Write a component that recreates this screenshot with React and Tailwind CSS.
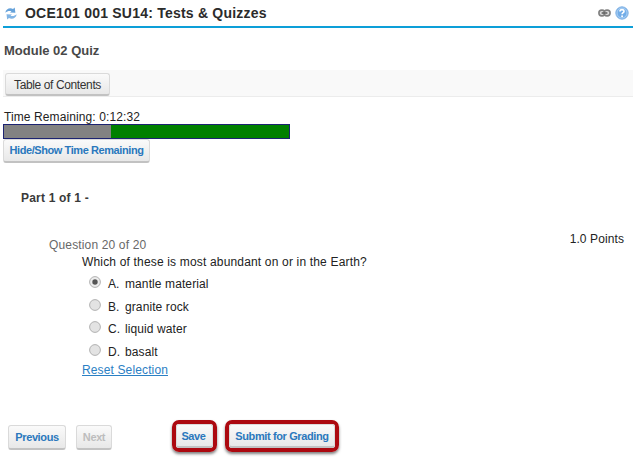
const buttonBase =
  'flex items-center justify-center rounded-[3px] border border-[#dadada] border-b-2 border-b-[#c2c2c2] bg-gradient-to-b from-[#fafafa] to-[#e8e8e8] whitespace-nowrap';

const options = [
  { letter: 'A.', text: 'mantle material', checked: true },
  { letter: 'B.', text: 'granite rock', checked: false },
  { letter: 'C.', text: 'liquid water', checked: false },
  { letter: 'D.', text: 'basalt', checked: false },
];

function RefreshIcon() {
  return (
    <svg className="block h-[13px] w-[12px]" viewBox="0 0 12 13" aria-hidden="true">
      <path d="M0.3 5.8 C0.8 2 4.6 0.4 8 1.9 L9.7 0.6 L10.4 5.8 L5 5.6 L6.5 4.3 C4.4 3.6 2.2 4.1 0.3 5.8Z" fill="#66a2da" />
      <path d="M11.7 7.2 C11.2 11 7.4 12.6 4 11.1 L2.2 12.4 L1.5 7.2 L7 7.4 L5.5 8.7 C7.6 9.4 9.8 8.9 11.7 7.2Z" fill="#82b5e5" />
    </svg>
  );
}

function LinkIcon() {
  return (
    <svg className="block h-[8px] w-[13px]" viewBox="0 0 13 8" fill="none" aria-hidden="true">
      <rect x="0.9" y="1.1" width="6" height="5.8" rx="2.8" fill="#ddd" stroke="#808080" strokeWidth="1.6" />
      <rect x="6.1" y="1.1" width="6" height="5.8" rx="2.8" fill="#ddd" stroke="#808080" strokeWidth="1.6" />
      <path d="M3.6 4H9.4" stroke="#666" strokeWidth="1.6" />
    </svg>
  );
}

function HelpIcon() {
  return (
    <svg className="block h-[14px] w-[14px]" viewBox="0 0 14 14" fill="none" aria-hidden="true">
      <circle cx="7" cy="7" r="6.2" fill="#72ade8" stroke="#86b5e5" />
      <circle cx="7" cy="7" r="5" stroke="#b4d5f5" strokeWidth="0.9" />
      <path d="M5 5.6C5 4.2 5.8 3.6 7 3.6S9 4.3 9 5.4C9 6.7 7.1 6.7 7.1 8.2" stroke="#fff" strokeWidth="1.6" />
      <circle cx="7.1" cy="10.2" r="0.95" fill="#fff" />
    </svg>
  );
}

function Radio({ checked }) {
  return (
    <svg className="block h-[12px] w-[12px]" viewBox="0 0 12 12" aria-hidden="true">
      <circle cx="6" cy="6" r="5.4" fill={checked ? '#ececec' : '#e3e3e3'} stroke="#aaa" strokeWidth="0.9" />
      {checked && <circle cx="6" cy="6" r="2.7" fill="#555" />}
    </svg>
  );
}

export default function App() {
  return (
    <div className="flex h-[459px] w-[640px] flex-col overflow-hidden bg-white font-['Liberation_Sans',Arial,sans-serif] text-[12px] leading-[14px] text-[#222]">
      <header className="ml-[3px] flex h-[28px] w-[630px] shrink-0 items-center border-b-2 border-[#0d9fd8] pl-[2px]">
        <RefreshIcon />
        <h1 className="ml-[8px] flex-1 whitespace-nowrap text-[14px] font-bold leading-[16px] tracking-[0.22px] text-[#2b2b2b]">
          OCE101 001 SU14: Tests &amp; Quizzes
        </h1>
        <LinkIcon />
        <div className="ml-[4px] mr-[4px]">
          <HelpIcon />
        </div>
      </header>

      <h2 className="ml-[4px] mt-[15px] h-[15px] shrink-0 text-[13px] font-bold leading-[15px] text-[#484848]">
        Module 02 Quiz
      </h2>

      <div className="ml-[3px] mt-[12px] flex h-[27px] w-[630px] shrink-0 items-start border-b border-[#ececec] bg-[#f9f9f9] pl-[2px] pt-[3px]">
        <button className={`${buttonBase} h-[23px] w-[105px] pt-px text-[12px] tracking-[-0.38px] text-[#333]`}>
          Table of Contents
        </button>
      </div>

      <div className="ml-[4px] mt-[13px] h-[14px] shrink-0 tracking-[0.1px]">Time Remaining: 0:12:32</div>
      <div className="ml-[3px] flex h-[15px] w-[287px] shrink-0 border border-[#1c2371] bg-[#008000]">
        <div className="w-[107px] bg-[#828282]" />
      </div>
      <button
        className={`${buttonBase} ml-[3px] h-[24px] w-[147px] shrink-0 pb-px text-[11px] font-bold tracking-[-0.42px] text-[#2a78bd]`}
      >
        Hide/Show Time Remaining
      </button>

      <h3 className="ml-[21px] mt-[28px] h-[14px] shrink-0 font-bold tracking-[0.2px] text-[#3a3a3a]">Part 1 of 1 -</h3>

      <div className="ml-[49px] mt-[27px] flex h-[22px] w-[575px] shrink-0 items-start justify-between">
        <span className="pt-[6px] tracking-[0.15px] text-[#686868]">Question 20 of 20</span>
        <span className="tracking-[0.1px]">1.0 Points</span>
      </div>

      <main className="ml-[82px] flex shrink-0 flex-col items-start">
        <p className="h-[16px] whitespace-nowrap pt-px tracking-[0.17px]">
          Which of these is most abundant on or in the Earth?
        </p>
        <div className="flex flex-col pt-[6px]">
          {options.map((o) => (
            <div key={o.letter} className="flex h-[22.5px] items-start pl-[7px]">
              <Radio checked={o.checked} />
              <span className="ml-[7px] w-[17px] pt-px">{o.letter}</span>
              <span className="whitespace-nowrap pt-px tracking-[0.1px]">{o.text}</span>
            </div>
          ))}
        </div>
        <a className="-mt-[3px] h-[15px] tracking-[0.13px] text-[#2b80c4] underline">Reset Selection</a>
      </main>

      <footer className="ml-[8px] mt-[41px] flex h-[33px] shrink-0 items-center text-[11px] font-bold tracking-[-0.38px] text-[#2a78bd]">
        <button className={`${buttonBase} mt-[3px] h-[25px] w-[58px]`}>Previous</button>
        <button className={`${buttonBase} ml-[10px] mt-[3px] h-[25px] w-[36px] text-[#bdbdbd]`}>Next</button>
        <div className="ml-[60px] h-[32px] w-[45px] rounded-[7px] border-4 border-[#ac0910] shadow-[0_2px_3px_rgba(0,0,0,0.5)]">
          <button className={`${buttonBase} h-full w-full pr-[2px] pt-[2px]`}>Save</button>
        </div>
        <div className="ml-[8px] h-[32px] w-[114px] rounded-[7px] border-4 border-[#ac0910] shadow-[0_2px_3px_rgba(0,0,0,0.5)]">
          <button className={`${buttonBase} h-full w-full pt-[2px]`}>Submit for Grading</button>
        </div>
      </footer>
    </div>
  );
}
